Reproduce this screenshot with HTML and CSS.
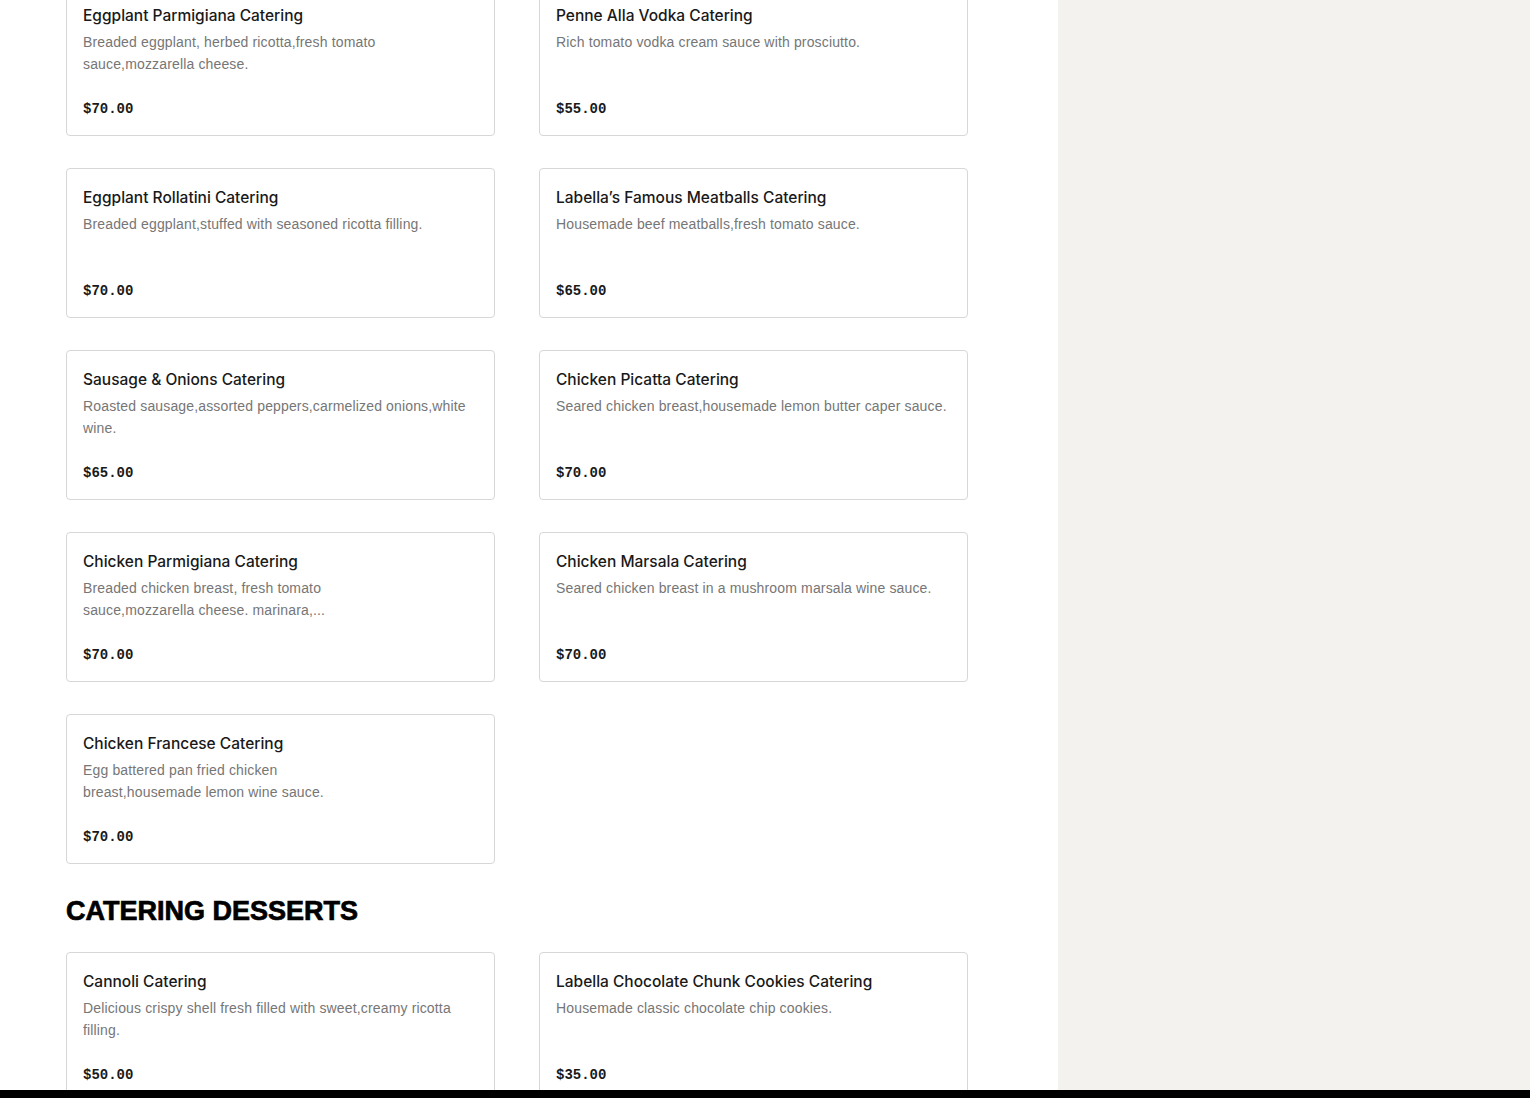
FILE: index.html
```html
<!DOCTYPE html>
<html lang="en">
<head>
<meta charset="utf-8">
<title>Catering Menu</title>
<link rel="stylesheet" href="styles.css">
</head>
<body>
<div class="page">
  <div class="main">
    <div class="content">
      <section class="menu-section first">
        <div class="grid">
          <div class="card">
            <div class="card-title">Eggplant Parmigiana Catering</div>
            <div class="card-desc">Breaded eggplant, herbed ricotta,fresh tomato sauce,mozzarella cheese.</div>
            <div class="card-price">$70.00</div>
          </div>
          <div class="card">
            <div class="card-title">Penne Alla Vodka Catering</div>
            <div class="card-desc">Rich tomato vodka cream sauce with prosciutto.</div>
            <div class="card-price">$55.00</div>
          </div>
          <div class="card">
            <div class="card-title">Eggplant Rollatini Catering</div>
            <div class="card-desc">Breaded eggplant,stuffed with seasoned ricotta filling.</div>
            <div class="card-price">$70.00</div>
          </div>
          <div class="card">
            <div class="card-title">Labella’s Famous Meatballs Catering</div>
            <div class="card-desc">Housemade beef meatballs,fresh tomato sauce.</div>
            <div class="card-price">$65.00</div>
          </div>
          <div class="card">
            <div class="card-title">Sausage &amp; Onions Catering</div>
            <div class="card-desc">Roasted sausage,assorted peppers,carmelized onions,white wine.</div>
            <div class="card-price">$65.00</div>
          </div>
          <div class="card">
            <div class="card-title">Chicken Picatta Catering</div>
            <div class="card-desc">Seared chicken breast,housemade lemon butter caper sauce.</div>
            <div class="card-price">$70.00</div>
          </div>
          <div class="card">
            <div class="card-title">Chicken Parmigiana Catering</div>
            <div class="card-desc">Breaded chicken breast, fresh tomato<br>sauce,mozzarella cheese. marinara,...</div>
            <div class="card-price">$70.00</div>
          </div>
          <div class="card">
            <div class="card-title">Chicken Marsala Catering</div>
            <div class="card-desc">Seared chicken breast in a mushroom marsala wine sauce.</div>
            <div class="card-price">$70.00</div>
          </div>
          <div class="card">
            <div class="card-title">Chicken Francese Catering</div>
            <div class="card-desc">Egg battered pan fried chicken<br>breast,housemade lemon wine sauce.</div>
            <div class="card-price">$70.00</div>
          </div>
        </div>
      </section>
      <section class="menu-section">
        <h2 class="section-title">CATERING DESSERTS</h2>
        <div class="grid">
          <div class="card">
            <div class="card-title">Cannoli Catering</div>
            <div class="card-desc">Delicious crispy shell fresh filled with sweet,creamy ricotta filling.</div>
            <div class="card-price">$50.00</div>
          </div>
          <div class="card">
            <div class="card-title">Labella Chocolate Chunk Cookies Catering</div>
            <div class="card-desc">Housemade classic chocolate chip cookies.</div>
            <div class="card-price">$35.00</div>
          </div>
        </div>
      </section>
    </div>
    <aside class="sidebar"></aside>
  </div>
  <div class="bottom-bar"></div>
</div>
</body>
</html>
```
FILE: styles.css
```css
html, body {
  margin: 0;
  padding: 0;
  height: 100%;
}
body {
  font-family: "Liberation Sans", Arial, sans-serif;
  color: #191919;
  background: #fff;
}
.page {
  height: 100vh;
  display: flex;
  flex-direction: column;
  overflow: hidden;
}
.main {
  flex: 1;
  display: flex;
  min-height: 0;
  overflow: hidden;
}
.content {
  width: 1058px;
  flex: none;
  background: #fff;
  padding-left: 66px;
  box-sizing: border-box;
}
.sidebar {
  flex: 1;
  background: #f3f2ef;
}
.bottom-bar {
  height: 8px;
  flex: none;
  background: #000;
}
.menu-section.first {
  margin-top: -14px;
}
.grid {
  display: grid;
  grid-template-columns: 429px 429px;
  column-gap: 44px;
  row-gap: 32px;
}
.card {
  border: 1px solid #d7d7d7;
  border-radius: 4px;
  padding: 16px;
  height: 150px;
  box-sizing: border-box;
  display: flex;
  flex-direction: column;
}
.card-title {
  font-family: "Inter", "Liberation Sans", sans-serif;
  font-size: 15.5px;
  font-weight: 500;
  line-height: 26px;
  color: #191919;
}
.card-desc {
  margin-top: 2px;
  font-family: "Liberation Sans", Arial, sans-serif;
  font-size: 14px;
  line-height: 22px;
  letter-spacing: 0.15px;
  color: #767676;
  height: 44px;
  overflow: hidden;
}
.card-price {
  margin-top: auto;
  font-family: "Liberation Mono", monospace;
  font-size: 14px;
  font-weight: 700;
  line-height: 20px;
  color: #191919;
}
.section-title {
  margin: 31px 0 25px 0;
  font-family: "Liberation Sans", Arial, sans-serif;
  font-weight: 900;
  font-size: 27px;
  line-height: 32px;
  color: #000;
  -webkit-text-stroke: 0.7px #000;
}
```
